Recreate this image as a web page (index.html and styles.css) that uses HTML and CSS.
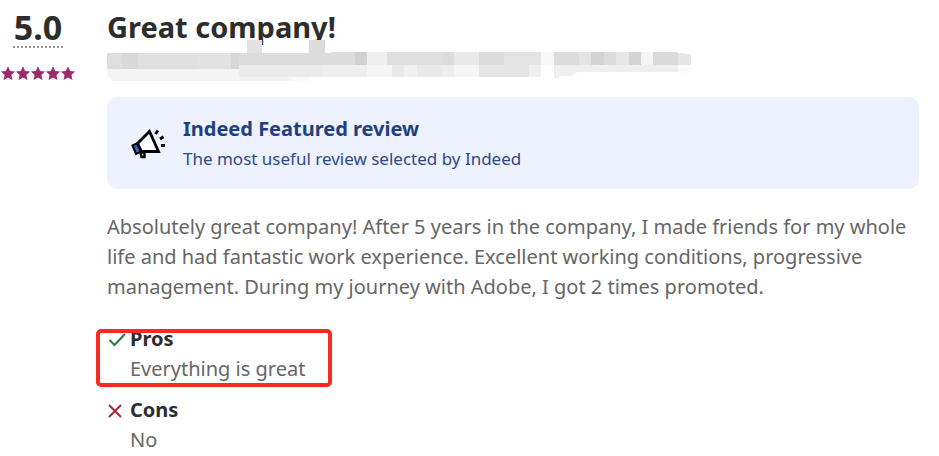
FILE: index.html
```
<!DOCTYPE html>
<html lang="en">
<head>
    <meta charset="UTF-8">
    <meta name="viewport" content="width=device-width, initial-scale=1.0">
    <title>Great company!</title>
    <link rel="stylesheet" href="styles.css">
</head>
<body>

    <article class="review">
        <!-- Rating -->
        <div class="rating">
            <button class="score" type="button">5.0</button>
            <svg class="stars" viewBox="0 0 75 15" role="img" aria-label="5 out of 5 stars">
                <defs>
                    <path id="star" d="M7.5 0.3 L9.6 5 L14.6 5.5 L10.9 8.9 L12 14 L7.5 11.4 L3 14 L4.1 8.9 L0.4 5.5 L5.4 5 Z"/>
                </defs>
                <use href="#star"/>
                <use href="#star" x="15"/>
                <use href="#star" x="30"/>
                <use href="#star" x="45"/>
                <use href="#star" x="60"/>
            </svg>
        </div>

        <div class="content">
            <h2 class="title">Great company!</h2>

            <!-- Author line, pixelated -->
            <svg class="author" viewBox="0 0 584 42" aria-hidden="true" shape-rendering="crispEdges">
                <path fill="#f4f4f4" d="M0 29h185v12H5l-5-5z"/>
                <path fill="#fafafa" d="M185 37h17v4h-17z"/>
                <path fill="#dedede" d="M0 13h15v16H0z"/>
                <path fill="#d9d9d9" d="M15 13h16v16H15z"/>
                <path fill="#e0e0e0" d="M31 13h35v16H31z"/>
                <path fill="#dfe1e1" d="M66 13h24v16H66z"/>
                <path fill="#e2e2e2" d="M90 13h34v16H90z"/>
                <path fill="#d7d7d7" d="M124 13h8v16h-8z"/>
                <path fill="#dcdcdc" d="M132 13h92v-1h24v13H132z"/>
                <path fill="#e2e2e2" d="M140 0h15v13h-15z"/>
                <path fill="#dcdcdc" d="M202 0h16v13h-16z"/>
                <path fill="#d1d1d1" d="M248 12h12v13h-12z"/>
                <path fill="#efefef" d="M260 12h20v13h-20z"/>
                <path fill="#dfdfdf" d="M280 12h55v13h-55z"/>
                <path fill="#dadddc" d="M335 12h12v13h-12z"/>
                <path fill="#e9e9e9" d="M347 12h25v13h-25z"/>
                <path fill="#dcdcdc" d="M372 12h25v13h-25z"/>
                <path fill="#e4e4e4" d="M397 12h37v13h-37z"/>
                <path fill="#f8f8f8" d="M434 12h13v13h-13z"/>
                <path fill="#dcdcdc" d="M447 12h25v13h-25z"/>
                <path fill="#e4e4e4" d="M472 12h12v13h-12z"/>
                <path fill="#d4d3d2" d="M484 12h13v13h-13z"/>
                <path fill="#dcdcdc" d="M497 12h12v13h-12z"/>
                <path fill="#e8e7e6" d="M509 12h13v13h-13z"/>
                <path fill="#d3d4d7" d="M522 12h12v13h-12z"/>
                <path fill="#f5f5f4" d="M534 12h12v13h-12z"/>
                <path fill="#dadadb" d="M546 12h25v13h-25z"/>
                <path fill="#e6e6e6" d="M571 13h6l2 1h5v11h-13z"/>
                <path fill="#ebebeb" d="M132 25h84v12h-84z"/>
                <path fill="#eeeeee" d="M216 25h44v12h-44z"/>
                <path fill="#f6f6f6" d="M260 25h25v12h-25z"/>
                <path fill="#e9e9e9" d="M285 25h12v12h-12z"/>
                <path fill="#f1f1f1" d="M297 25h13v12h-13z"/>
                <path fill="#e9e9e9" d="M310 25h25v12h-25z"/>
                <path fill="#eeeeee" d="M335 25h12v12h-12z"/>
                <path fill="#f6f6f6" d="M347 25h25v12h-25z"/>
                <path fill="#e5e5e5" d="M372 25h50v12h-50z"/>
                <path fill="#f0f0f0" d="M422 25h12v12h-12z"/>
                <path fill="#efefef" d="M447 25h124v7H471l-7 4h-12v2h-5z"/>
                <path fill="#fbfbfb" d="M571 25h13v8h-13z"/>
            </svg>

            <section class="featured">
                <svg class="megaphone" viewBox="0 0 36 36" aria-hidden="true">
                    <g stroke="#000" stroke-linejoin="miter">
                        <path d="M1.5 19.5 L6.5 17 L10.5 25.5 L5 28 Z" fill="#3563b8" stroke-width="2"/>
                        <path d="M6.5 17.5 L18.5 5.5 L27.5 25.5 L10.5 25.5 Z" fill="#fff" stroke-width="2.8"/>
                        <path d="M9.5 26.5 L13.5 26.5 L13.5 31 L10.5 31 Z" fill="#fff" stroke-width="2.4"/>
                        <path d="M24.5 8 L27 4.5 M29 13 L32.5 10.8 M30 19.5 L34 19.5" fill="none" stroke-width="2.8"/>
                    </g>
                </svg>
                <div>
                    <h3 class="featured-title">Indeed Featured review</h3>
                    <p class="featured-text">The most useful review selected by Indeed</p>
                </div>
            </section>

            <p class="text">Absolutely great company! After 5 years in the company, I made friends for my whole life and had fantastic work experience. Excellent working conditions, progressive management. During my journey with Adobe, I got 2 times promoted.</p>

            <section class="point pros">
                <svg class="mark" viewBox="0 0 18 18" fill="none" stroke="#2c7a3f" stroke-width="2" aria-hidden="true">
                    <path d="M1.5 10 L6.5 15 L17 4"/>
                </svg>
                <h3>Pros</h3>
                <p>Everything is great</p>
            </section>

            <section class="point">
                <svg class="mark" viewBox="0 0 18 18" fill="none" stroke="#a62b37" stroke-width="2" aria-hidden="true">
                    <path d="M1 4 L13 16 M13 4 L1 16"/>
                </svg>
                <h3>Cons</h3>
                <p>No</p>
            </section>
        </div>
    </article>

</body>
</html>
```
FILE: styles.css
```
body {
    margin: 0;
    background: #fff;
    color: #2d2d2d;
    font-family: "Noto Sans", sans-serif;
    font-size: 20px;
    line-height: 30px;
}
h2, h3, p {
    margin: 0;
}
.review {
    display: flex;
    gap: 31px;
    padding: 8px 20px 0 0;
}
.rating {
    display: flex;
    flex-direction: column;
    align-items: center;
    flex: none;
    width: 76px;
}
.score {
    padding: 0 1px;
    border: none;
    border-bottom: 2px dotted #949494;
    background: none;
    color: inherit;
    font: bold 34px/38px "Noto Sans", sans-serif;
    cursor: pointer;
}
.stars {
    width: 76px;
    height: 15px;
    margin-top: 18px;
    fill: #9d2b6b;
}
.content {
    flex: 1;
    min-width: 0;
}
.title {
    font-size: 29px;
    line-height: 38px;
}
.author {
    display: block;
    width: 584px;
    max-width: 100%;
    margin-top: -6px;
}
.featured {
    display: flex;
    align-items: center;
    gap: 16px;
    margin-top: 15px;
    padding: 17px 24px 15px;
    border-radius: 10px;
    background: #eef1fe;
    color: #2d4a86;
}
.megaphone {
    flex: none;
    width: 36px;
    height: 36px;
}
.featured-title {
    color: #1f4080;
    font-size: 20px;
    line-height: 30px;
}
.featured-text {
    font-size: 17px;
    line-height: 30px;
}
.text {
    margin-top: 23px;
    color: #666;
}
.point {
    position: relative;
    margin-top: 11px;
    padding-left: 23px;
}
.point h3 {
    font-size: 20px;
    line-height: 30px;
}
.point p {
    color: #666;
}
.mark {
    position: absolute;
    top: 6px;
    left: 1px;
    width: 18px;
    height: 18px;
}
.pros {
    margin-top: 22px;
}
/* red highlight frame around the pros */
.pros::after {
    content: "";
    position: absolute;
    top: 5px;
    left: -11px;
    width: 228px;
    height: 50px;
    border: 4px solid #fb2a20;
    border-radius: 5px;
}
```
